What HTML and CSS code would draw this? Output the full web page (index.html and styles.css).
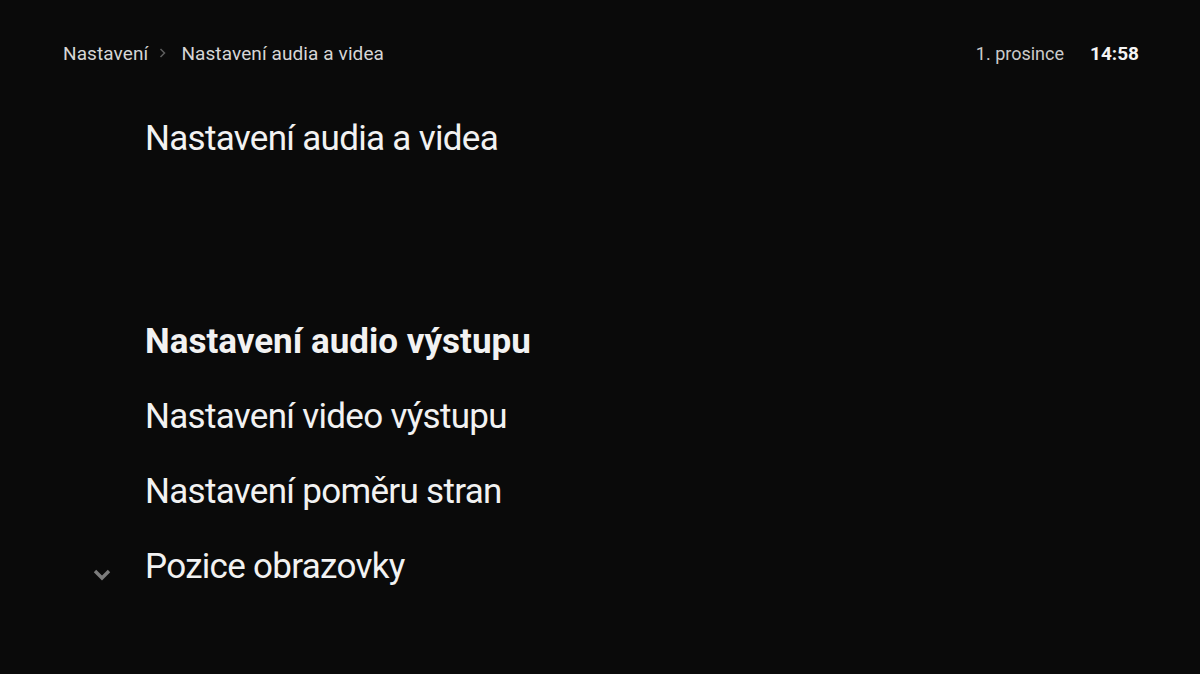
FILE: index.html
```html
<!DOCTYPE html>
<html lang="cs">
<head>
<meta charset="utf-8">
<link rel="stylesheet" href="styles.css">
</head>
<body>
<div class="screen">
  <header class="topbar">
    <nav class="crumbs">
      <span class="crumb">Nastavení</span>
      <svg class="crumb-sep" width="8" height="10" viewBox="0 0 8 10"><path d="M1.5 1 L5.5 5 L1.5 9" fill="none" stroke="#5e5e5e" stroke-width="1.5"/></svg>
      <span class="crumb">Nastavení audia a videa</span>
    </nav>
    <div class="clock">
      <span class="date">1. prosince</span>
      <span class="time">14:58</span>
    </div>
  </header>
  <h1 class="title">Nastavení audia a videa</h1>
  <ul class="menu">
    <li class="item active">Nastavení audio výstupu</li>
    <li class="item">Nastavení video výstupu</li>
    <li class="item">Nastavení poměru stran</li>
    <li class="item more">
      <svg class="chev" width="20" height="17" viewBox="0 0 20 17"><path d="M3 4 L10 11 L17 4" fill="none" stroke="#7c7c7c" stroke-width="3.4"/></svg>
      Pozice obrazovky
    </li>
  </ul>
</div>
</body>
</html>
```
FILE: styles.css
```css
html, body {
  margin: 0;
  padding: 0;
  background: #0a0a0a;
}
.screen {
  width: 1200px;
  height: 674px;
  background: #0a0a0a;
  color: #f2f2f2;
  font-family: Roboto, "Liberation Sans", sans-serif;
  overflow: hidden;
}
.topbar {
  display: flex;
  justify-content: space-between;
  align-items: center;
  padding: 40px 61px 0 63px;
  height: 26px;
}
.crumbs {
  display: flex;
  align-items: center;
  font-size: 19px;
  letter-spacing: 0.1px;
  color: #d6d6d6;
}
.crumb-sep {
  margin: 0 14px 0 11px;
}
.clock {
  display: flex;
  align-items: center;
  gap: 26px;
  font-size: 18px;
}
.date { color: #cbcbcb; font-size: 18px; }
.time { font-weight: 700; color: #f4f4f4; font-size: 19px; }
.title {
  margin: 53px 0 0 145px;
  font-size: 35px;
  letter-spacing: -0.7px;
  font-weight: 400;
  line-height: 40px;
}
.menu {
  list-style: none;
  margin: 163px 0 0 0;
  padding: 0 0 0 145px;
}
.item {
  position: relative;
  font-size: 35px;
  letter-spacing: -0.7px;
  line-height: 40px;
  height: 75px;
}
.item.active {
  font-weight: 700;
  letter-spacing: 0;
}
.chev {
  position: absolute;
  left: -53px;
  top: 20px;
}
```
